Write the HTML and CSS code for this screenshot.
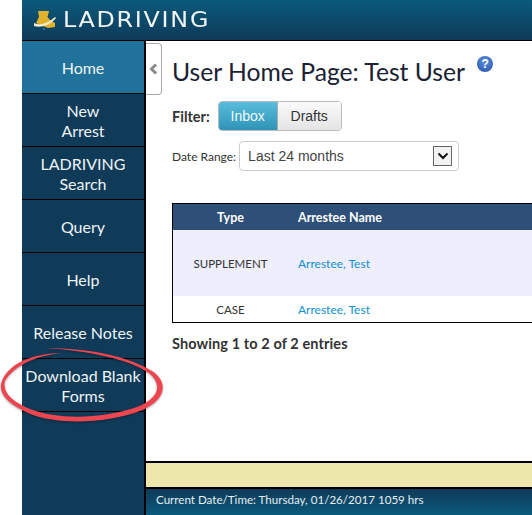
FILE: index.html
```html
<!DOCTYPE html>
<html lang="en">
<head>
    <meta charset="UTF-8">
    <title>User Home Page</title>
    <link rel="stylesheet" href="styles.css">
</head>
<body>
    <div class="app">
        <header class="topbar">
            <svg class="logo" width="30" height="24" viewBox="0 0 30 24">
                <path d="M6 3H17L15.500 9 18 12 23 15 23 19 16 20 11 18 4 15 7 9Z" fill="#e0b22c"/>
                <path d="M2 15C9 18 16 15 23 9L24 10C17 18 8 20 2 18Z" fill="#f4ecd0"/>
                <circle cx="12" cy="21" r="1" fill="#2f7fa8"/>
            </svg>
            <span class="brand">LADRIVING</span>
        </header>
        <div class="body-row">
            <nav class="sidebar">
                <a class="nav-item active">Home</a>
                <a class="nav-item">New<br>Arrest</a>
                <a class="nav-item">LADRIVING<br>Search</a>
                <a class="nav-item">Query</a>
                <a class="nav-item">Help</a>
                <a class="nav-item">Release Notes</a>
                <a class="nav-item">Download Blank<br>Forms</a>
            </nav>
            <div class="main-col">
                <main class="main">
                    <button class="collapse-tab">
                        <svg width="9" height="12" viewBox="0 0 9 12"><path d="M7 1.500 2.500 6 7 10.500" fill="none" stroke="#8a8a8a" stroke-width="3"/></svg>
                    </button>
                    <div class="content">
                        <div class="title-row">
                            <h1>User Home Page: Test User</h1>
                            <span class="help-icon">?</span>
                        </div>
                        <div class="filter-row">
                            <b class="filter-label">Filter:</b>
                            <div class="btn-group">
                                <span class="btn btn-on">Inbox</span>
                                <span class="btn btn-drafts">Drafts</span>
                            </div>
                        </div>
                        <div class="range-row">
                            <span class="range-label">Date Range:</span>
                            <div class="select">
                                <span>Last 24 months</span>
                                <span class="select-arrow">
                                    <svg width="12" height="8" viewBox="0 0 12 8"><path d="M1.500 1.500 6 6l4.500-4.500" fill="none" stroke="#111" stroke-width="2"/></svg>
                                </span>
                            </div>
                        </div>
                        <table class="grid">
                            <thead>
                                <tr>
                                    <th class="col-type">Type</th>
                                    <th class="col-name">Arrestee Name</th>
                                    <th class="col-sort">
                                        <svg width="10" height="16" viewBox="0 0 10 16"><path d="M5 0l5 7H0zM5 16l5-7H0z" fill="#c9ced6"/></svg>
                                    </th>
                                </tr>
                            </thead>
                            <tbody>
                                <tr class="row-tall">
                                    <td class="col-type">SUPPLEMENT</td>
                                    <td class="col-name"><a class="link">Arrestee, Test</a></td>
                                    <td></td>
                                </tr>
                                <tr class="row-short">
                                    <td class="col-type">CASE</td>
                                    <td class="col-name"><a class="link">Arrestee, Test</a></td>
                                    <td></td>
                                </tr>
                            </tbody>
                        </table>
                        <p class="entries">Showing 1 to 2 of 2 entries</p>
                    </div>
                </main>
                <div class="notice"></div>
                <footer class="status">Current Date/Time: Thursday, 01/26/2017 1059 hrs</footer>
            </div>
        </div>
        <!-- red circle drawn over the screenshot -->
        <svg class="markup" width="170" height="80" viewBox="0 0 170 80">
            <path d="M45 3C90 3 130 12 152 26 170 38 165 56 140 66 105 79 55 80 28 68 8 59-3 48 2 36 8 20 30 8 63 8 35 10 13 22 5 36 2 47 12 57 30 64 58 75 102 74 137 62 159 53 163 40 149 28 128 14 90 6 45 3Z" fill="#ec4651"/>
        </svg>
    </div>
</body>
</html>
```

FILE: styles.css
```css
html, body {
    margin: 0;
    height: 100%;
    background: #fff;
    overflow: hidden;
}
.app {
    position: relative;
    height: 515px;
    margin-left: 22px;
    display: flex;
    flex-direction: column;
    font-family: Lato, "Open Sans", sans-serif;
    color: #333;
}
.topbar {
    height: 40px;
    flex: none;
    display: flex;
    align-items: center;
    padding-left: 10px;
    gap: 1px;
    background: linear-gradient(#0b5a7c, #0f3a58);
    border-bottom: 1px solid #000;
}
.logo {
    flex: none;
}
.brand {
    font-family: "DejaVu Sans", sans-serif;
    font-size: 20.500px;
    letter-spacing: 1.500px;
    color: #f2f5f7;
    transform: scaleX(1.16);
    transform-origin: left center;
}
.body-row {
    flex: 1;
    display: flex;
    min-height: 0;
}
.sidebar {
    width: 122px;
    flex: none;
    background: #0f3a58;
    border-right: 2px solid #000;
}
.nav-item {
    display: flex;
    align-items: center;
    justify-content: center;
    box-sizing: border-box;
    height: 53px;
    padding-top: 1px;
    border-bottom: 1px solid #000;
    text-align: center;
    font-size: 16px;
    line-height: 20px;
    color: #eef3f6;
}
.nav-item.active {
    background: #20729a;
}
.main-col {
    flex: 1;
    min-width: 0;
    display: flex;
    flex-direction: column;
}
.main {
    flex: 1;
    min-height: 0;
    display: flex;
    overflow: hidden;
}
.collapse-tab {
    width: 16px;
    height: 52px;
    flex: none;
    margin-top: 2px;
    padding: 0;
    background: #fff;
    border: 1px solid #aaa;
    border-left: 0;
    border-radius: 0 4px 4px 0;
    display: flex;
    align-items: center;
    justify-content: center;
}
.content {
    padding-left: 10px;
    flex: 1;
    min-width: 0;
}
.title-row {
    display: flex;
    align-items: flex-start;
    height: 60px;
}
h1 {
    margin: 14px 0 0;
    font-size: 24.700px;
    font-weight: 400;
    line-height: 34px;
    color: #1a2233;
    white-space: nowrap;
}
.help-icon {
    width: 16px;
    height: 16px;
    margin: 15px 0 0 12px;
    border-radius: 50%;
    background: radial-gradient(circle at 50% 35%, #5f8fdc, #2350a8);
    color: #fff;
    font: bold 12px/16px "Liberation Sans", sans-serif;
    text-align: center;
}
.filter-row {
    display: flex;
    align-items: center;
    gap: 8px;
    height: 30px;
}
.filter-label {
    font-size: 14.500px;
}
.btn-group {
    display: flex;
    box-sizing: border-box;
    height: 30px;
    border: 1px solid #bbb;
    border-radius: 4px;
    overflow: hidden;
}
.btn {
    width: 58px;
    display: flex;
    align-items: center;
    justify-content: center;
    font: 14px "Liberation Sans", sans-serif;
    color: #333;
    background: linear-gradient(#fafafa, #e4e4e4);
}
.btn-drafts {
    width: 63px;
}
.btn-on {
    color: #f0f8fb;
    background: linear-gradient(#58bcdc, #2f94b6);
    border-right: 1px solid #aaa;
}
.range-row {
    display: flex;
    align-items: center;
    gap: 3px;
    margin-top: 10px;
    height: 30px;
}
.range-label {
    font-size: 12px;
}
.select {
    width: 220px;
    height: 30px;
    box-sizing: border-box;
    border: 1px solid #ccc;
    border-radius: 4px;
    display: flex;
    align-items: center;
    justify-content: space-between;
    padding: 0 6px 0 8px;
    font: 14px "Liberation Sans", sans-serif;
    color: #444;
}
.select-arrow {
    width: 19px;
    height: 20px;
    box-sizing: border-box;
    border: 1px solid #666;
    background: #f2f2f2;
    display: flex;
    align-items: center;
    justify-content: center;
}
.grid {
    width: 400px;
    margin-top: 32px;
    border-collapse: collapse;
    table-layout: fixed;
    border: 1px solid #000;
    font-size: 12px;
}
.grid th {
    height: 26px;
    padding: 0;
    background: #2d4f78;
    color: #fff;
    font-size: 12.500px;
    text-align: left;
}
.grid td {
    padding: 0;
}
.grid th.col-type, .grid td.col-type {
    width: 115px;
    text-align: center;
}
.grid td.col-type {
    font-size: 11.500px;
}
.grid .col-name {
    width: 228px;
    padding-left: 10px;
}
.col-sort svg {
    display: block;
    margin-left: 6px;
}
.row-tall td {
    height: 66px;
    background: #eeeefc;
}
.row-short td {
    height: 26px;
}
.link {
    color: #0f8fd6;
}
.entries {
    margin: 12px 0 0;
    font-size: 14.500px;
    letter-spacing: 0.100px;
    font-weight: 700;
}
.notice {
    height: 24px;
    flex: none;
    background: #ede7ac;
    border-top: 2px solid #000;
    border-bottom: 2px solid #000;
}
.status {
    height: 26px;
    flex: none;
    box-sizing: border-box;
    padding: 3px 0 0 10px;
    font-size: 11.600px;
    line-height: 16px;
    color: #e6eef2;
    background: linear-gradient(#0f3a58, #0b5a7c);
}
.markup {
    position: absolute;
    left: -22px;
    top: 345px;
    filter: drop-shadow(0 1px 1px rgba(0, 0, 0, 0.35));
}
```
